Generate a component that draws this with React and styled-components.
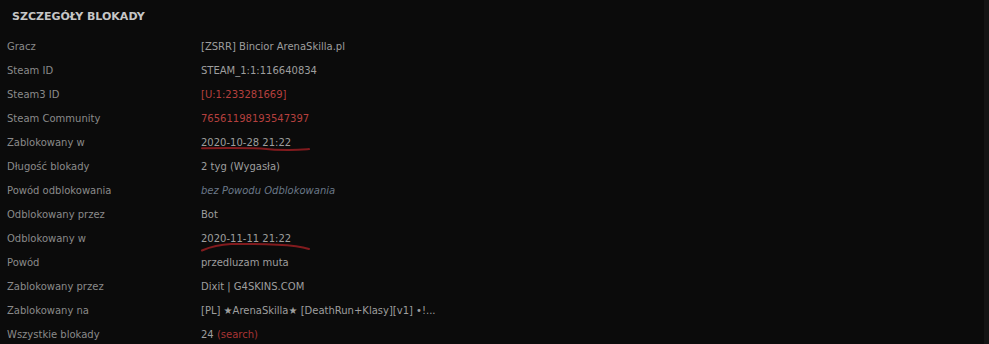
import React from "react";
import styled, { createGlobalStyle } from "styled-components";

const Global = createGlobalStyle`
  html, body { margin: 0; padding: 0; background: #141414; }
  body { font-family: "DejaVu Sans", Verdana, sans-serif; }
`;

const Panel = styled.div`
  width: 984px;
  height: 344px;
  background: #0b0b0b;
  overflow: hidden;
`;

const Header = styled.div`
  height: 34px;
  display: flex;
  align-items: center;
  padding-left: 12px;
  padding-bottom: 2px;
  box-sizing: border-box;
  font-weight: bold;
  font-size: 11px;
  color: #c6c6c6;
`;

const Row = styled.div`
  display: grid;
  grid-template-columns: 201px 1fr;
  height: 24px;
  align-items: center;
  font-size: 10px;
`;

const Label = styled.div`
  padding-left: 7px;
  color: #8a8a8a;
  white-space: nowrap;
`;

const Value = styled.div`
  position: relative;
  color: ${(p) =>
    p.$tone === "red" ? "#b5403e" : p.$tone === "muted" ? "#6a7888" : "#9e9e9e"};
  font-style: ${(p) => (p.$tone === "muted" ? "italic" : "normal")};
  white-space: nowrap;
`;

const Search = styled.span`
  color: #a83434;
`;

const Scribble = styled.svg`
  position: absolute;
  left: 0;
  top: 0;
  overflow: visible;
  pointer-events: none;
`;

const Underline1 = () => (
  <Scribble width="120" height="20">
    <path
      d="M1 11.3 C 20 11, 45 11.1, 60 11.4 C 68 12.4, 76 13.2, 88 13.1 C 98 12.9, 105 12.3, 108 12.1"
      fill="none"
      stroke="#821b1e"
      strokeWidth="2"
      strokeLinecap="round"
    />
  </Scribble>
);

const Underline2 = () => (
  <Scribble width="120" height="20">
    <path
      d="M1 17.5 C 9 14, 18 11.5, 30 11 C 55 10.7, 80 11.5, 95 13.2 C 101 14, 105 15, 108 16"
      fill="none"
      stroke="#821b1e"
      strokeWidth="2"
      strokeLinecap="round"
    />
  </Scribble>
);

const rows = [
  { label: "Gracz", value: "[ZSRR] Bincior ArenaSkilla.pl" },
  { label: "Steam ID", value: "STEAM_1:1:116640834" },
  { label: "Steam3 ID", value: "[U:1:233281669]", tone: "red" },
  { label: "Steam Community", value: "76561198193547397", tone: "red" },
  { label: "Zablokowany w", value: "2020-10-28 21:22", mark: 1 },
  { label: "Długość blokady", value: "2 tyg (Wygasła)" },
  { label: "Powód odblokowania", value: "bez Powodu Odblokowania", tone: "muted" },
  { label: "Odblokowany przez", value: "Bot" },
  { label: "Odblokowany w", value: "2020-11-11 21:22", mark: 2 },
  { label: "Powód", value: "przedluzam muta" },
  { label: "Zablokowany przez", value: "Dixit | G4SKINS.COM" },
  { label: "Zablokowany na", value: "[PL] ★ArenaSkilla★ [DeathRun+Klasy][v1] •!..." },
  {
    label: "Wszystkie blokady",
    value: (
      <>
        24 <Search>(search)</Search>
      </>
    ),
  },
];

export default function App() {
  return (
    <>
      <Global />
      <Panel>
        <Header>SZCZEGÓŁY BLOKADY</Header>
        {rows.map((r, i) => (
          <Row key={i}>
            <Label>{r.label}</Label>
            <Value $tone={r.tone}>
              {r.value}
              {r.mark === 1 && <Underline1 />}
              {r.mark === 2 && <Underline2 />}
            </Value>
          </Row>
        ))}
      </Panel>
    </>
  );
}
